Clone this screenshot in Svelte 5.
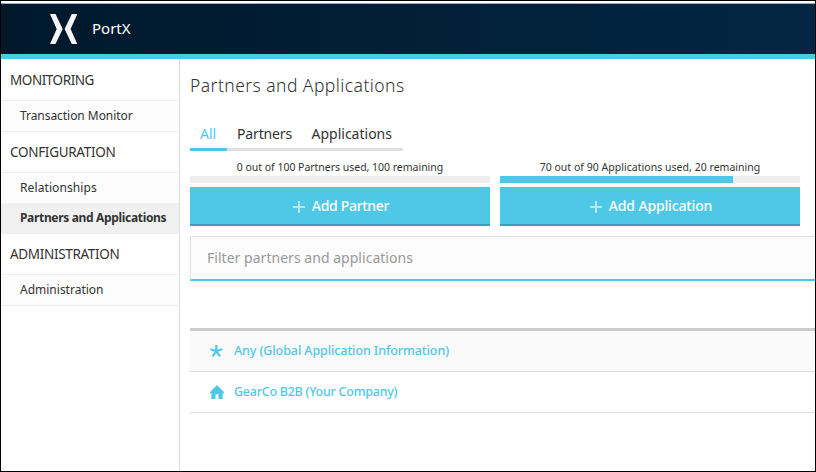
<script>
  const sections = [
    { title: 'MONITORING', ls: -0.45, items: [{ label: 'Transaction Monitor', ls: -0.05 }] },
    {
      title: 'CONFIGURATION',
      ls: -0.3,
      items: [
        { label: 'Relationships', ls: 0.1 },
        { label: 'Partners and Applications', ls: -0.33, active: true }
      ]
    },
    { title: 'ADMINISTRATION', ls: -0.33, items: [{ label: 'Administration', ls: 0 }] }
  ];
  const quotas = [
    { text: '0 out of 100 Partners used, 100 remaining', ls: -0.02, percent: 0, action: 'Add Partner', als: -0.3 },
    { text: '70 out of 90 Applications used, 20 remaining', ls: 0.03, percent: 77.7, action: 'Add Application', als: -0.15 }
  ];
</script>

<div class="window">
  <header>
    <svg class="logo" width="28" height="30" viewBox="0 0 28 30">
      <path d="M0 0H5.5L12.7 15L5.5 30H0L6.7 15ZM27.3 0H21.8L14.6 15L21.8 30H27.3L20.6 15Z" />
    </svg>
    <span class="brand">PortX</span>
  </header>
  <div class="body">
    <nav>
      {#each sections as section}
        <div class="heading"><span style="letter-spacing:{section.ls}px">{section.title}</span></div>
        <div class="group">
          {#each section.items as item}
            <div class="item" class:active={item.active}>
              <span style="letter-spacing:{item.ls}px">{item.label}</span>
            </div>
          {/each}
        </div>
      {/each}
    </nav>
    <main>
      <h1>Partners and Applications</h1>
      <div class="tabs">
        <div class="tab all">All</div>
        <div class="tab partners">Partners</div>
        <div class="tab apps">Applications</div>
      </div>
      <div class="quotas">
        {#each quotas as q}
          <div class="quota">
            <div class="usage"><span style="letter-spacing:{q.ls}px">{q.text}</span></div>
            <div class="bar"><div class="fill" style="width:{q.percent}%"></div></div>
            <button>
              <svg width="12" height="12" viewBox="0 0 12 12"><path d="M0 5H5V0H7V5H12V7H7V12H5V7H0Z" /></svg>
              <span style="letter-spacing:{q.als}px">{q.action}</span>
            </button>
          </div>
        {/each}
      </div>
      <div class="filter"><span>Filter partners and applications</span></div>
      <div class="list">
        <div class="row shaded">
          <svg width="14" height="14" viewBox="0 0 14 14">
            <path d="M6.3 7.2V1M6.3 7.2L.4 5.2M6.3 7.2L12.2 5.2M6.3 7.2L2.6 12.4M6.3 7.2L10 12.4" fill="none" stroke="#4fc8e8" stroke-width="2.2" />
          </svg>
          <span class="any">Any (Global Application Information)</span>
        </div>
        <div class="row">
          <svg width="14" height="14" viewBox="0 0 14 14">
            <path d="M7 0L14 7V8.2H12.6V14H8.5V9.3H5.5V14H1.4V8.2H0V7Z" fill="#4fc8e8" />
          </svg>
          <span class="gear">GearCo B2B (Your Company)</span>
        </div>
      </div>
    </main>
  </div>
</div>

<style>
  .window {
    box-sizing: border-box;
    width: 816px;
    height: 472px;
    border: 1px solid #000;
    padding-top: 2px;
    background: #fff;
    overflow: hidden;
    color: #333;
    font-family: 'Noto Sans', sans-serif;
    font-size: 13px;
    display: flex;
    flex-direction: column;
  }
  span { white-space: nowrap; }
  header {
    box-sizing: border-box;
    height: 56px;
    flex: none;
    border-top: 1px solid #a6a8b2;
    border-bottom: 5px solid #4fc8e8;
    background: linear-gradient(90deg, #01182b, #022643);
    display: flex;
    align-items: center;
    padding-left: 49px;
  }
  .logo { fill: #f4f5f6; }
  .brand { margin: -3px 0 0 14px; color: #fff; font-size: 15px; }
  .body { display: flex; flex: 1; min-height: 0; }
  nav { width: 178px; border-right: 1px solid #ddd; flex: none; }
  .heading { height: 41px; line-height: 43px; padding-left: 9px; font-size: 13.5px; }
  .group { border-top: 1px solid #eee; border-bottom: 1px solid #eee; background: #fcfcfc; }
  .item { height: 30px; line-height: 29px; padding-left: 19px; font-size: 12px; }
  .item.active { height: 31px; background: #f0f0f0; font-weight: 700; margin-bottom: -1px; }
  .heading:nth-child(n + 2) { height: 40px; line-height: 40px; }
  main { flex: 1; min-width: 0; padding-left: 10px; }
  h1 { margin: 0; height: 57px; line-height: 52px; font-size: 17.5px; font-weight: 350; letter-spacing: 0.44px; white-space: nowrap; }
  .tabs { display: flex; width: 213px; height: 35px; line-height: 36px; font-size: 14px; }
  .tab { box-sizing: border-box; border-bottom: 3px solid #e0e0e0; padding-left: 10px; white-space: nowrap; }
  .all { width: 37px; color: #4fc8e8; border-color: #4fc8e8; }
  .partners { width: 74px; letter-spacing: -0.15px; }
  .apps { width: 102px; padding-left: 10.5px; }
  .quotas { display: flex; gap: 10px; padding-top: 7px; }
  .quota { width: 300px; }
  .usage { height: 18px; line-height: 18px; text-align: center; font-size: 10.5px; }
  .bar { height: 7px; background: #eee; margin-bottom: 4px; }
  .fill { height: 7px; background: #4fc8e8; }
  button {
    box-sizing: border-box;
    width: 300px;
    height: 39px;
    border: 0;
    border-bottom: 2px solid #409fb8;
    background: #4fc8e8;
    color: #fff;
    font: 500 14px 'Noto Sans', sans-serif;
    display: flex;
    align-items: center;
    justify-content: center;
    gap: 7px;
    padding: 0 0 0 2px;
  }
  button svg { fill: #b9e9f6; margin-top: 3px; }
  .filter {
    box-sizing: border-box;
    height: 45px;
    margin-top: 10px;
    border: 1px solid #e1e1e1;
    border-right: 0;
    border-bottom: 2px solid #4fc8e8;
    background: #fcfcfc;
    color: #999;
    font-size: 14px;
    letter-spacing: 0.03px;
    line-height: 42px;
    padding-left: 16px;
  }
  .list { margin-top: 47px; border-top: 3px solid #ccc; }
  .row {
    height: 40px;
    border-bottom: 1px solid #ddd;
    display: flex;
    align-items: center;
    gap: 10px;
    padding-left: 20px;
    color: #4fc8e8;
    font-weight: 500;
    font-size: 12.5px;
  }
  .row span { margin-top: -2px; }
  .any { letter-spacing: -0.09px; }
  .gear { letter-spacing: -0.25px; }
  .shaded { background: #fafafa; }
</style>
